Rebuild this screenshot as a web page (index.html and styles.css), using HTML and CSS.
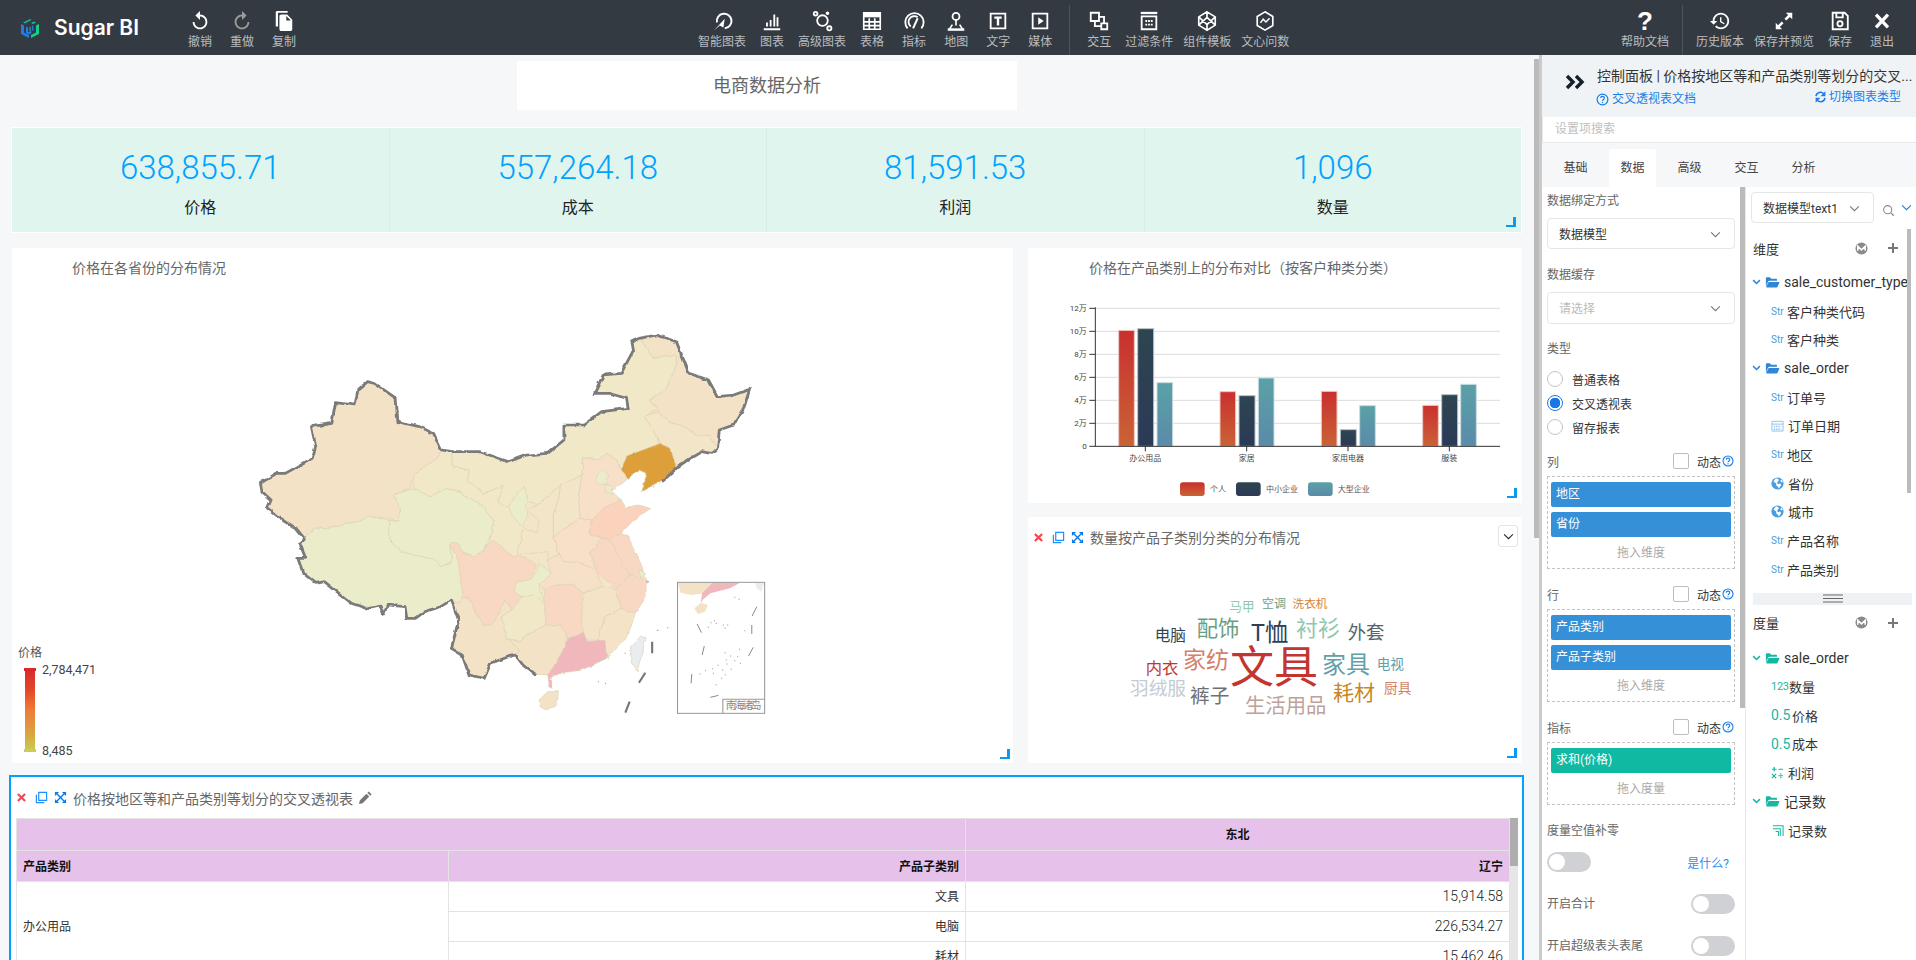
FILE: index.html
```html
<!DOCTYPE html>
<html lang="zh-CN">
<head>
<meta charset="utf-8">
<title>Sugar BI</title>
<link rel="stylesheet" href="styles.css">
</head>
<body>
<svg class="defs" aria-hidden="true">
  <defs>
    <symbol id="folder" viewBox="0 0 24 20"><path fill="currentColor" d="M1 17V3.500C1 2.700 1.700 2 2.500 2h5L10 4.500h8c.8 0 1.500.7 1.500 1.500v2H7c-1 0-1.800.5-2.200 1.300zM6 10h16.500c.8 0 1.200.7.900 1.400l-3 6.600c-.2.600-.8 1-1.400 1H2.500c-.8 0-1.200-.7-.9-1.400L5 10.800c.2-.5.500-.8 1-.8z"/></symbol>
    <symbol id="globe" viewBox="0 0 16 16"><circle cx="8" cy="8" r="7.500" fill="#4a9de0"/><path fill="#fff" d="M6 1.500l3 1 .5 2-2 2 1 2.500 3-1 1 2-3 4-1-2-2-1.500V8L3 5.500zM13 3l1.500 3-2 .5-1-2z"/></symbol>
    <symbol id="xi" viewBox="0 0 10 10"><path fill="none" stroke="#f4474f" stroke-width="2.400" d="M1 1l8 8M9 1l-8 8"/></symbol>
    <symbol id="copyi" viewBox="0 0 14 14"><path fill="none" stroke="currentColor" stroke-width="1.300" d="M4 1.500h8.500v8.500H4zM1.500 4v8.500H10"/></symbol>
    <symbol id="expandi" viewBox="0 0 14 14"><path fill="none" stroke="currentColor" stroke-width="1.500" d="M3 3l8 8M11 3l-8 8"/><path fill="currentColor" d="M1 1h4.500L1 5.500zM13 1v4.500L8.500 1zM1 13V8.500L5.500 13zM13 13H8.500L13 8.500z"/></symbol>
    <symbol id="helpi" viewBox="0 0 14 14"><circle cx="7" cy="7" r="5.800" fill="none" stroke="currentColor" stroke-width="1.300"/><path fill="none" stroke="currentColor" stroke-width="1.300" d="M5 5.500C5 4.300 6 3.700 7 3.700s2 .7 2 1.800C9 7 7 7 7 8.600"/><circle cx="7" cy="10.300" r=".8" fill="currentColor"/></symbol>
    <symbol id="chev" viewBox="0 0 12 8"><path fill="none" stroke="currentColor" stroke-width="1.200" d="M1 1.500l5 5 5-5"/></symbol>
    <symbol id="chevb" viewBox="0 0 12 8"><path fill="none" stroke="currentColor" stroke-width="2" d="M1.500 1.500L6 6l4.500-4.500"/></symbol>
    <symbol id="mono" viewBox="0 0 14 14"><circle cx="7" cy="7" r="6.500" fill="#8a8a8a"/><path fill="none" stroke="#fff" stroke-width="1.600" d="M3 9.500V4.500l4 4 4-4v5"/></symbol>
    <symbol id="plus" viewBox="0 0 12 12"><path fill="#777" d="M5 1h2v4h4v2H7v4H5V7H1V5h4z"/></symbol>
  </defs>
</svg>

<header class="topbar">
  <div class="brand">
    <svg class="logo" viewBox="0 0 20 20"><path fill="#1f7de6" d="M1 6l3 1.500v7L9 17v3l-8-4z"/><path fill="#1f7de6" d="M6 8.500l2 1v4l1 .5 1-.5 1.500-.5v2L9 16.500 6 15z"/><path fill="#12d08a" d="M19 6l-3 1.500v7L11 17v3l8-4z"/><path fill="#0fb59a" d="M3 4.500L10 1l1.500 1L5 5.500z"/><path fill="#14c98d" d="M11 5l3-1.500 2 1-3 1.500z"/><path fill="#1f9fd0" d="M9.500 9v4h1.200V9z"/><path fill="#1f7de6" d="M12 8v4.500h1.300V7.500z"/></svg>
    <span class="brand-name">Sugar BI</span>
  </div>

  <nav class="tools tools-left">
    <div class="tool"><svg class="ticon" viewBox="0 0 24 24"><path fill="#fff" d="M12 5V1L7 6l5 5V7c3.310 0 6 2.690 6 6s-2.690 6-6 6-6-2.690-6-6H4c0 4.420 3.580 8 8 8s8-3.580 8-8-3.580-8-8-8z"/></svg><span>撤销</span></div>
    <div class="tool"><svg class="ticon" viewBox="0 0 24 24"><path fill="#9c9c9c" d="M12 5V1l5 5-5 5V7c-3.310 0-6 2.690-6 6s2.690 6 6 6 6-2.690 6-6h2c0 4.420-3.580 8-8 8s-8-3.580-8-8 3.580-8 8-8z"/></svg><span>重做</span></div>
    <div class="tool"><svg class="ticon" viewBox="0 0 24 24"><path fill="#fff" d="M16 1H4.500C3.400 1 3 1.900 3 3v15h2.500V3H16zM15.500 5l5.500 5.500V21c0 1.100-.9 2-2 2H9c-1.100 0-2-.9-2-2V7c0-1.100.9-2 2-2zM14.500 6.500v5h5z"/></svg><span>复制</span></div>
  </nav>

  <nav class="tools tools-center">
    <div class="tool wide"><svg class="ticon" viewBox="0 0 24 24"><path fill="none" stroke="#fff" stroke-width="2.200" d="M6.500 13.500A8 8 0 1 1 15 20"/><path fill="#fff" d="M3 22.500L15 9.500 13.500 19 9.500 17z"/></svg><span>智能图表</span></div>
    <div class="tool"><svg class="ticon" viewBox="0 0 24 24"><path fill="none" stroke="#fff" stroke-width="2" d="M6.500 18v-4.500M10.500 18v-7M14.500 18V5M18 18V8"/><path stroke="#fff" stroke-width="2.200" d="M3 21h18"/></svg><span>图表</span></div>
    <div class="tool wide"><svg class="ticon" viewBox="0 0 24 24"><g fill="none" stroke="#fff" stroke-width="2"><circle cx="12.500" cy="11.500" r="5.800"/><circle cx="5" cy="4" r="2"/><circle cx="20" cy="20" r="2.300"/><circle cx="18" cy="3.500" r="1"/></g></svg><span>高级图表</span></div>
    <div class="tool"><svg class="ticon" viewBox="0 0 24 24"><path fill="none" stroke="#fff" stroke-width="1.800" d="M3 3h18v18H3zM3 13h18M3 17h18M9 9v12M15 9v12"/><path fill="#fff" d="M3 3h18v5H3z"/></svg><span>表格</span></div>
    <div class="tool"><svg class="ticon" viewBox="0 0 24 24"><path fill="none" stroke="#fff" stroke-width="2" d="M5 20A10 10 0 1 1 20 20M8.500 18A6 6 0 1 1 16 8"/><path fill="none" stroke="#fff" stroke-width="2.200" d="M11 20l5-11"/></svg><span>指标</span></div>
    <div class="tool"><svg class="ticon" viewBox="0 0 24 24"><circle cx="12" cy="7" r="3.800" fill="none" stroke="#fff" stroke-width="2"/><path fill="none" stroke="#fff" stroke-width="1.800" d="M12 11v6M8 16l-3.500 5.500h15L16 16"/><path fill="#fff" d="M3 20h18v2.500H3z"/></svg><span>地图</span></div>
    <div class="tool"><svg class="ticon" viewBox="0 0 24 24"><path fill="none" stroke="#fff" stroke-width="2" d="M4 4h16v16H4z"/><path fill="#fff" d="M8 7h8v2.500h-2.700V17h-2.600V9.500H8z"/></svg><span>文字</span></div>
    <div class="tool"><svg class="ticon" viewBox="0 0 24 24"><path fill="none" stroke="#fff" stroke-width="2" d="M4 4h16v16H4z"/><path fill="#fff" d="M10 8l6 4-6 4z"/></svg><span>媒体</span></div>
    <i class="tdiv"></i>
    <div class="tool"><svg class="ticon" viewBox="0 0 24 24"><path fill="none" stroke="#fff" stroke-width="2" d="M3 3h9v9H3zM14.500 14.500H21V21h-6.500zM12 7.500h5.500v7M7.500 12v5.500h7"/></svg><span>交互</span></div>
    <div class="tool wide"><svg class="ticon" viewBox="0 0 24 24"><path fill="#fff" d="M3 2h18v2.500H3z"/><path fill="none" stroke="#fff" stroke-width="2" d="M4 7h16v14H4z"/><path fill="#fff" d="M8 11h2v2H8zM11 11h2v2h-2zM14 11h2v2h-2zM8 15h2v2H8zM11 15h2v2h-2zM14 15h2v2h-2z"/></svg><span>过滤条件</span></div>
    <div class="tool wide"><svg class="ticon" viewBox="0 0 24 24"><path fill="none" stroke="#fff" stroke-width="1.800" d="M12 2l9 5.500v9L12 22l-9-5.500v-9zM12 2v6M12 16v6M3 7.500L12 16l9-8.500M3 16.500L12 8l9 8.500"/></svg><span>组件模板</span></div>
    <div class="tool wide"><svg class="ticon" viewBox="0 0 24 24"><path fill="none" stroke="#fff" stroke-width="1.800" d="M12 2l8.500 5v10L12 22l-8.500-5V7z"/><path fill="none" stroke="#fff" stroke-width="1.600" d="M7 14l3-4 3 3 4-4"/></svg><span>文心问数</span></div>
  </nav>

  <nav class="tools tools-right">
    <div class="tool wide"><span class="qmark">?</span><span>帮助文档</span></div>
    <i class="tdiv"></i>
    <div class="tool wide"><svg class="ticon" viewBox="0 0 24 24"><path fill="#fff" d="M13 3c-4.970 0-9 4.030-9 9H1l3.890 3.890.07.14L9 12H6c0-3.870 3.130-7 7-7s7 3.130 7 7-3.130 7-7 7c-1.930 0-3.680-.79-4.940-2.060l-1.420 1.420C8.270 19.990 10.510 21 13 21c4.970 0 9-4.030 9-9s-4.030-9-9-9zm-1 5v5l4.280 2.540.72-1.210-3.500-2.080V8H12z"/></svg><span>历史版本</span></div>
    <div class="tool wide"><svg class="ticon" viewBox="0 0 24 24"><path fill="#fff" d="M14 3h7v7l-2.500-2.500-4 4-2-2 4-4zM10 21H3v-7l2.500 2.500 4-4 2 2-4 4z"/></svg><span>保存并预览</span></div>
    <div class="tool"><svg class="ticon" viewBox="0 0 24 24"><path fill="none" stroke="#fff" stroke-width="2" d="M4 3h13l3.500 3.500V21H4zM8 3v5h7V3"/><circle cx="12" cy="15" r="2.800" fill="none" stroke="#fff" stroke-width="2"/></svg><span>保存</span></div>
    <div class="tool"><svg class="ticon" viewBox="0 0 24 24"><path fill="none" stroke="#fff" stroke-width="3.600" d="M5.500 5l13 14M18.500 5l-13 14"/></svg><span>退出</span></div>
  </nav>
</header>

<main class="main">
  <section class="canvas">
    <div class="page-title">电商数据分析</div>

    <div class="kpi">
      <div class="kpi-cell"><div class="kpi-num">638,855.71</div><div class="kpi-label">价格</div></div>
      <div class="kpi-cell"><div class="kpi-num">557,264.18</div><div class="kpi-label">成本</div></div>
      <div class="kpi-cell"><div class="kpi-num">81,591.53</div><div class="kpi-label">利润</div></div>
      <div class="kpi-cell"><div class="kpi-num">1,096</div><div class="kpi-label">数量</div></div>
      <i class="corner"></i>
    </div>

    <div class="charts">
      <div class="card map-card">
        <div class="card-title map-title">价格在各省份的分布情况</div>
        <div class="map-body">
          <svg class="map" viewBox="0 0 1568 1260" preserveAspectRatio="none">
            <defs>
              <filter id="rough" x="-5%" y="-5%" width="110%" height="110%" color-interpolation-filters="sRGB">
                <feTurbulence type="fractalNoise" baseFrequency="0.04" numOctaves="2" seed="4"/>
                <feDisplacementMap in="SourceGraphic" scale="11" xChannelSelector="R" yChannelSelector="G"/>
              </filter>
            </defs>
            <g filter="url(#rough)">
              <polygon class="c-sand2" points="855,1095 820,1065 800,1035 780,1040 730,1060 712,1105 670,1095 650,1035 620,1015 640,930 620,870 590,890 545,905 520,925 495,925 490,890 440,885 430,915 420,885 380,895 340,880 305,850 265,815 240,820 205,790 190,745 212,745 195,700 208,685 185,655 135,620 105,595 115,570 90,545 85,520 130,490 155,490 230,445 240,410 228,350 285,340 295,278 350,285 358,240 385,215 405,220 465,265 470,335 530,350 570,370 592,420 620,425 700,425 780,455 830,435 890,430 935,390 935,345 990,345 1040,305 1115,295 1110,265 1060,250 1020,250 1045,195 1095,190 1130,120 1125,95 1145,85 1195,75 1250,95 1285,190 1340,210 1365,260 1410,255 1455,238 1440,290 1410,345 1370,360 1365,415 1350,430 1320,425 1280,450 1250,475 1215,510 1150,545 1165,490 1145,480 1115,505 1070,545 1095,570 1110,595 1140,585 1178,595 1130,630 1095,670 1115,680 1150,760 1160,790 1165,810 1165,860 1135,910 1115,975 1075,1020 1055,1045 985,1080 920,1090 895,1105 890,1095"/>
              <g class="prov">
                <polygon class="c-tan" points="85,520 130,490 155,490 230,445 240,410 228,350 285,340 295,278 350,285 358,240 385,215 405,220 465,265 470,335 530,350 570,370 592,420 580,445 515,490 505,535 458,555 478,600 470,630 400,620 300,650 235,655 208,685 185,655 135,620 105,595 115,570 90,545"/>
                <polygon class="c-green" points="208,685 235,655 300,650 400,620 445,632 445,690 480,725 575,750 590,770 620,755 615,700 640,755 652,860 640,880 620,870 590,890 545,905 520,925 495,925 490,890 440,885 430,915 420,885 380,895 340,880 305,850 265,815 240,820 205,790 190,745 212,745 195,700"/>
                <polygon class="c-green" points="445,632 470,630 478,600 458,555 515,535 560,560 605,535 640,545 700,580 740,630 725,690 710,715 690,740 650,725 635,695 615,700 620,755 590,770 575,750 480,725 445,690"/>
                <polygon class="c-sand" points="592,420 620,425 625,470 670,480 665,510 710,550 765,525 750,580 780,590 820,655 815,690 805,735 790,740 735,690 710,715 725,690 740,630 700,580 640,545 605,535 560,560 515,535 515,490 580,445"/>
                <polygon class="c-sand" points="620,425 700,425 780,455 830,435 890,430 935,390 935,345 990,345 1040,305 1115,295 1110,265 1060,250 1020,250 1045,195 1095,190 1130,120 1125,95 1145,85 1185,145 1250,135 1250,165 1220,240 1175,270 1195,300 1160,320 1195,375 1200,405 1110,440 1095,480 1080,450 1055,430 1035,450 990,445 985,495 925,525 880,570 860,580 835,575 825,530 805,550 780,590 750,580 765,525 710,550 665,510 670,480 625,470"/>
                <polygon class="c-tan" points="1145,85 1195,75 1250,95 1285,190 1340,210 1365,260 1410,255 1455,238 1440,290 1410,345 1370,360 1365,415 1340,375 1310,380 1280,355 1230,335 1200,305 1175,270 1220,240 1250,165 1250,135 1185,145"/>
                <polygon class="c-sand2" points="1160,320 1200,305 1230,335 1280,355 1310,380 1340,375 1365,415 1350,430 1320,425 1280,450 1250,475 1235,420 1205,400 1195,375"/>
                <polygon class="c-orange" points="1095,480 1110,438 1205,400 1235,420 1250,475 1215,510 1150,545 1165,490 1145,480 1115,505"/>
                <polygon class="c-peach" points="985,495 990,445 1035,450 1055,430 1080,450 1095,480 1115,505 1070,545 1095,570 1040,600 1015,630 980,625 975,560"/>
                <polygon class="c-green" points="1020,510 1040,478 1060,495 1055,520 1035,525"/>
                <polygon class="c-green" points="1050,520 1070,530 1072,552 1052,548"/>
                <polygon class="c-sand2" points="925,525 985,495 975,560 980,625 905,680 905,610 920,570"/>
                <polygon class="c-sand2" points="880,570 925,525 920,570 905,610 905,680 920,730 885,755 890,725 805,735 815,690 820,655 860,665 865,630 835,605 860,580"/>
                <polygon class="c-green" points="825,530 835,575 825,590 835,605 820,655 790,615 780,590 805,550"/>
                <polygon class="c-peach" points="905,680 980,625 1015,630 1005,670 1040,685 1010,730 1025,780 985,760 935,755 920,730"/>
                <polygon class="c-salmon" points="1015,630 1040,600 1095,570 1110,595 1140,585 1178,595 1130,630 1095,670 1060,685 1030,680 1005,670"/>
                <polygon class="c-salmon2" points="1060,685 1095,670 1115,680 1150,760 1160,790 1120,795 1090,745 1070,700"/>
                <polygon class="c-salmon2" points="1040,685 1060,685 1070,700 1090,745 1120,795 1080,835 1030,790 1010,730"/>
                <polygon class="c-salmon2" points="1120,795 1140,800 1165,810 1165,860 1135,910 1095,895 1080,835"/>
                <polygon class="c-green" points="1145,775 1165,790 1150,805"/>
                <polygon class="c-peach2" points="885,755 920,730 935,755 985,760 1025,780 1030,790 1040,830 990,850 960,825 910,825 885,845 865,820 900,790"/>
                <polygon class="c-green" points="865,760 900,790 865,820 880,880 850,855 815,860 795,845 800,820 840,810 860,785"/>
                <polygon class="c-salmon2" points="615,700 635,695 650,725 690,740 735,690 790,740 805,735 860,760 840,810 800,820 795,845 815,860 810,885 790,900 770,870 735,945 710,945 665,860 652,860 640,755"/>
                <polygon class="c-tan" points="652,860 665,860 710,945 735,945 770,870 790,900 760,920 775,985 810,1020 800,1035 780,1040 730,1060 712,1105 670,1095 650,1035 620,1015 640,930 620,870 640,880"/>
                <polygon class="c-sand" points="760,920 790,900 815,860 850,855 880,880 885,945 830,975 810,995 775,985"/>
                <polygon class="c-salmon2" points="880,840 910,825 960,825 990,850 985,920 990,970 945,985 925,945 885,945"/>
                <polygon class="c-tan2" points="990,850 1040,830 1080,835 1095,895 1050,920 1030,990 1000,990 990,970 985,920"/>
                <polygon class="c-tan2" points="1095,895 1135,910 1115,975 1075,1020 1055,1045 1030,990 1050,920"/>
                <polygon class="c-tan" points="775,985 810,995 830,975 885,945 925,945 945,985 925,1040 890,1095 850,1090 820,1065 800,1035 810,1020"/>
                <polygon class="c-pink" points="945,985 990,970 1000,995 1050,990 1055,1045 985,1080 920,1090 895,1105 905,1135 890,1130 890,1095 925,1040"/>
                <polygon class="c-tan" points="865,1170 890,1145 920,1145 915,1185 885,1200 868,1190"/>
                <polygon class="c-taiwan" points="1125,1010 1150,978 1165,980 1140,1085 1120,1040"/>
              </g>
              <polyline class="border" points="855,1095 820,1065 800,1035 780,1040 730,1060 712,1105 670,1095 650,1035 620,1015 640,930 620,870 590,890 545,905 520,925 495,925 490,890 440,885 430,915 420,885 380,895 340,880 305,850 265,815 240,820 205,790 190,745 212,745 195,700 208,685 185,655 135,620 105,595 115,570 90,545 85,520 130,490 155,490 230,445 240,410 228,350 285,340 295,278 350,285 358,240 385,215 405,220 465,265 470,335 530,350 570,370 592,420 620,425 700,425 780,455 830,435 890,430 935,390 935,345 990,345 1040,305 1115,295 1110,265 1060,250 1020,250 1045,195 1095,190 1130,120 1125,95 1145,85 1195,75 1250,95 1285,190 1340,210 1365,260 1410,255 1455,238 1440,290 1410,345 1370,360 1365,415 1350,430 1320,425 1280,450 1250,475 1215,510"/>
            </g>
            <path class="dash" d="M1182,995V1030M1163,1088L1145,1118M1119,1175L1107,1208"/>
            <path class="dots" d="M1195,961h5M1224,953h3M1105,1030h3M1160,1090h3M1030,1115h3M1050,1120h3M1185,530h3M1165,815h8"/>
            <g class="inset">
              <rect x="1253" y="817" width="244" height="393" fill="#fff"/>
              <path class="c-tan" d="M1254,818H1350L1330,850 1290,855 1262,848Z"/>
              <path class="c-pink" d="M1350,818H1428L1400,835 1345,850 1325,868 1318,880 1322,850 1340,830Z"/>
              <path class="c-tan" d="M1300,895L1320,878 1338,885 1330,905 1310,912Z"/>
              <path class="c-taiwan" d="M1470,818H1495L1488,845 1475,835Z"/>
              <path class="dash-thin" d="M1475,890L1462,918M1308,942L1320,968M1461,945V972M1328,1008L1322,1035M1465,1012L1452,1038M1293,1092L1291,1120M1345,1162L1368,1156"/>
              <path class="dots" d="M1345,938h3M1355,932h3M1360,940h3M1380,945h3M1392,945h3M1385,955h3M1440,962h3M1338,952h3M1412,862h3M1424,868h3M1385,1028h3M1425,1018h3M1400,1038h3M1420,1040h3M1388,1050h3M1412,1052h3M1365,1066h3M1390,1062h3M1428,1060h3M1350,1076h3M1378,1080h3M1402,1078h3M1330,1082h3M1314,1092h3M1352,1090h3M1385,1095h3M1375,1105h3M1360,1124h3"/>
              <rect class="inset-box" x="1253" y="817" width="244" height="393"/>
              <path class="inset-box" d="M1380,1210V1168H1497"/>
              <text class="inset-text" x="1438" y="1198" text-anchor="middle" textLength="100">南海诸岛</text>
            </g>
          </svg>
          <div class="legend">
            <div class="legend-name">价格</div>
            <div class="legend-row">
              <div class="legend-bar"></div>
              <div class="legend-vals"><span>2,784,471</span><span>8,485</span></div>
            </div>
          </div>
        </div>
        <i class="corner corner-map"></i>
      </div>

      <div class="side">
        <div class="card bar-card">
          <div class="card-title side-title">价格在产品类别上的分布对比（按客户种类分类）</div>
          <svg class="bars" viewBox="-6 120 1482 630">
            <defs>
              <linearGradient id="gr" x1="0" y1="0" x2="0" y2="1"><stop offset="0" stop-color="#c9302e"/><stop offset="1" stop-color="#c96336"/></linearGradient>
              <linearGradient id="gn" x1="0" y1="0" x2="0" y2="1"><stop offset="0" stop-color="#2d4551"/><stop offset="1" stop-color="#2b3a56"/></linearGradient>
              <linearGradient id="gt" x1="0" y1="0" x2="0" y2="1"><stop offset="0" stop-color="#5aa1a7"/><stop offset="1" stop-color="#5b8aa9"/></linearGradient>
            </defs>
            <path class="grid" d="M196 175H1410M196 244H1410M196 313H1410M196 382H1410M196 451H1410M196 520H1410"/>
            <g class="b-r">
              <rect x="266" y="241" width="47" height="348"/><rect x="570" y="425" width="47" height="164"/><rect x="874" y="424" width="47" height="165"/><rect x="1178" y="466" width="47" height="123"/>
            </g>
            <g class="b-n">
              <rect x="323" y="236" width="48" height="353"/><rect x="627" y="437" width="48" height="152"/><rect x="931" y="539" width="48" height="50"/><rect x="1235" y="434" width="48" height="155"/>
            </g>
            <g class="b-t">
              <rect x="381" y="398" width="47" height="191"/><rect x="685" y="384" width="47" height="205"/><rect x="989" y="467" width="47" height="122"/><rect x="1292" y="403" width="47" height="186"/>
            </g>
            <path class="axis" d="M196 172V589M178 175H196M178 244H196M178 313H196M178 382H196M178 451H196M178 520H196M178 589H1410M346 589V604M650 589V604M954 589V604M1258 589V604"/>
            <g class="ylab">
              <text x="170" y="183">12万</text><text x="170" y="252">10万</text><text x="170" y="321">8万</text><text x="170" y="390">6万</text><text x="170" y="459">4万</text><text x="170" y="528">2万</text><text x="170" y="597">0</text>
            </g>
            <g class="xlab">
              <text x="346" y="633">办公用品</text><text x="650" y="633">家居</text><text x="954" y="633">家用电器</text><text x="1258" y="633">服装</text>
            </g>
            <rect x="450" y="697" width="74" height="41" rx="9" fill="url(#gr)"/>
            <rect x="618" y="697" width="74" height="41" rx="9" fill="url(#gn)"/>
            <rect x="834" y="697" width="74" height="41" rx="9" fill="url(#gt)"/>
            <g class="leg">
              <text x="540" y="726">个人</text><text x="708" y="726">中小企业</text><text x="923" y="726">大型企业</text>
            </g>
          </svg>
          <i class="corner"></i>
        </div>

        <div class="card cloud-card">
          <div class="card-head">
            <svg class="ic-x"><use href="#xi"/></svg>
            <svg class="ic ic-copy"><use href="#copyi"/></svg>
            <svg class="ic ic-exp"><use href="#expandi"/></svg>
            <span class="card-title-inline">数量按产品子类别分类的分布情况</span>
            <span class="drop-btn"><svg class="drop-chev"><use href="#chev"/></svg></span>
          </div>
          <svg class="cloud" viewBox="-6 141 1482 618">
            <text x="732" y="518" font-size="132" fill="#c23531">文具</text>
            <text x="636" y="304" font-size="38" fill="#91c7ae">马甲</text>
            <text x="732" y="294" font-size="36" fill="#6e9f85">空调</text>
            <text x="840" y="294" font-size="35" fill="#d48233">洗衣机</text>
            <text x="421" y="394" font-size="47" fill="#2f4554">电脑</text>
            <text x="564" y="378" font-size="64" fill="#6a9d80">配饰</text>
            <text x="719" y="394" font-size="70" fill="#2c4153">T恤</text>
            <text x="864" y="379" font-size="66" fill="#91c7ae">衬衫</text>
            <text x="1008" y="388" font-size="55" fill="#546570">外套</text>
            <text x="528" y="475" font-size="69" fill="#d4806c">家纺</text>
            <text x="396" y="492" font-size="49" fill="#c23531">内衣</text>
            <text x="948" y="490" font-size="72" fill="#61a0a8">家具</text>
            <text x="1081" y="476" font-size="41" fill="#61a0a8">电视</text>
            <text x="384" y="556" font-size="56" fill="#c4ccd3">羽绒服</text>
            <text x="539" y="580" font-size="59" fill="#6e7074">裤子</text>
            <text x="767" y="609" font-size="61" fill="#bda29a">生活用品</text>
            <text x="972" y="570" font-size="63" fill="#ca8622">耗材</text>
            <text x="1103" y="549" font-size="41" fill="#d48265">厨具</text>
          </svg>
          <i class="corner"></i>
        </div>
      </div>
    </div>

    <div class="table-card">
      <div class="card-head table-head">
        <svg class="ic-x"><use href="#xi"/></svg>
        <svg class="ic ic-copy"><use href="#copyi"/></svg>
        <svg class="ic ic-exp"><use href="#expandi"/></svg>
        <span class="card-title-inline">价格按地区等和产品类别等划分的交叉透视表</span>
        <svg class="ic-pencil" viewBox="0 0 16 16"><path fill="#777" d="M11.500 1.500l3 3-1.500 1.500-3-3zM9 4l3 3-7 7-4 1 1-4z"/></svg>
      </div>
      <div class="table-wrap">
        <table class="pivot">
          <colgroup><col class="col-a"><col class="col-b"><col class="col-c"></colgroup>
          <thead>
            <tr class="hr1"><th colspan="2"></th><th class="center">东北</th></tr>
            <tr class="hr2"><th class="left">产品类别</th><th>产品子类别</th><th>辽宁</th></tr>
          </thead>
          <tbody>
            <tr><td class="left" rowspan="3">办公用品</td><td>文具</td><td class="num">15,914.58</td></tr>
            <tr><td>电脑</td><td class="num">226,534.27</td></tr>
            <tr><td>耗材</td><td class="num">15,462.46</td></tr>
          </tbody>
        </table>
        <div class="table-scroll"><i></i></div>
      </div>
    </div>
  </section>

  <div class="canvas-scroll"><i></i></div>
  <div class="panel-edge"></div>

  <aside class="panel">
    <div class="panel-head">
      <svg class="collapse" viewBox="0 0 20 16"><path fill="none" stroke="#14202c" stroke-width="3.400" d="M2 2l6 6-6 6M11 2l6 6-6 6"/></svg>
      <div class="panel-head-text">
        <div class="panel-title">控制面板 | 价格按地区等和产品类别等划分的交叉...</div>
        <div class="panel-links">
          <span class="plink plink-doc"><svg class="ic-help"><use href="#helpi"/></svg>交叉透视表文档</span>
          <span class="plink plink-switch"><svg class="ic-sync" viewBox="0 0 16 16"><path fill="none" stroke="#1a7ee6" stroke-width="2" d="M2.500 7A5.500 5.500 0 0 1 12 4M13.500 9A5.500 5.500 0 0 1 4 12"/><path fill="#1a7ee6" d="M14 1v6H8zM2 15V9h6z"/></svg>切换图表类型</span>
        </div>
      </div>
    </div>
    <div class="search">设置项搜索</div>
    <div class="tabs">
      <span class="tab">基础</span><span class="tab active">数据</span><span class="tab">高级</span><span class="tab">交互</span><span class="tab">分析</span>
    </div>
    <div class="panel-body">
      <div class="settings">
        <div class="label l1">数据绑定方式</div>
        <div class="select s1">数据模型<svg class="sel-chev"><use href="#chev"/></svg></div>
        <div class="label l2">数据缓存</div>
        <div class="select s2 ph">请选择<svg class="sel-chev"><use href="#chev"/></svg></div>
        <div class="label l3">类型</div>
        <div class="radios">
          <div class="radio"><i></i>普通表格</div>
          <div class="radio on"><i></i>交叉透视表</div>
          <div class="radio"><i></i>留存报表</div>
        </div>
        <div class="field-head fh1"><span class="label">列</span><span class="dyn"><i class="check"></i>动态<svg class="ic-help"><use href="#helpi"/></svg></span></div>
        <div class="dropbox tall">
          <div class="pill">地区</div><div class="pill">省份</div><div class="drop-ph">拖入维度</div>
        </div>
        <div class="field-head"><span class="label">行</span><span class="dyn"><i class="check"></i>动态<svg class="ic-help"><use href="#helpi"/></svg></span></div>
        <div class="dropbox tall">
          <div class="pill">产品类别</div><div class="pill">产品子类别</div><div class="drop-ph">拖入维度</div>
        </div>
        <div class="field-head"><span class="label">指标</span><span class="dyn"><i class="check"></i>动态<svg class="ic-help"><use href="#helpi"/></svg></span></div>
        <div class="dropbox short">
          <div class="pill green">求和(价格)</div><div class="drop-ph">拖入度量</div>
        </div>
        <div class="label l4">度量空值补零</div>
        <div class="switch-row first"><i class="toggle"></i><span class="what">是什么?</span></div>
        <div class="switch-row"><span class="label">开启合计</span><i class="toggle"></i></div>
        <div class="switch-row"><span class="label">开启超级表头表尾</span><i class="toggle"></i></div>
      </div>
      <div class="settings-scroll"><i></i></div>
      <div class="fields">
        <div class="model-row">
          <div class="select model">数据模型text1<svg class="sel-chev"><use href="#chev"/></svg></div>
          <svg class="ic-search" viewBox="0 0 16 16"><circle cx="7" cy="7" r="5" fill="none" stroke="#888" stroke-width="1.300"/><path stroke="#888" stroke-width="1.500" d="M11 11l3.500 3.500"/></svg>
          <svg class="chev-blue"><use href="#chev"/></svg>
        </div>
        <div class="group-head"><span>维度</span><svg class="gi"><use href="#mono"/></svg><svg class="gp"><use href="#plus"/></svg></div>
        <div class="tree">
          <div class="node folder"><svg class="tchev"><use href="#chevb"/></svg><svg class="tfold"><use href="#folder"/></svg><span>sale_customer_type</span></div>
          <div class="node"><b class="str">Str</b>客户种类代码</div>
          <div class="node"><b class="str">Str</b>客户种类</div>
          <div class="node folder"><svg class="tchev"><use href="#chevb"/></svg><svg class="tfold"><use href="#folder"/></svg><span>sale_order</span></div>
          <div class="node"><b class="str">Str</b>订单号</div>
          <div class="node"><svg class="ntype" viewBox="0 0 14 14"><path fill="none" stroke="#8cc1ec" stroke-width="1" d="M1 2.500h12v10.500H1zM1 5.500h12"/><path stroke="#8cc1ec" stroke-width="1.600" stroke-dasharray="1.500 1" d="M3 8h8M3 11h8"/></svg>订单日期</div>
          <div class="node"><b class="str">Str</b>地区</div>
          <div class="node"><svg class="ntype"><use href="#globe"/></svg>省份</div>
          <div class="node"><svg class="ntype"><use href="#globe"/></svg>城市</div>
          <div class="node"><b class="str">Str</b>产品名称</div>
          <div class="node"><b class="str">Str</b>产品类别</div>
        </div>
        <div class="drag-bar"><svg class="drag-lines" viewBox="0 0 20 9"><path stroke="#666" stroke-width="1" d="M0 1h20M0 4.500h20M0 8h20"/></svg></div>
        <div class="group-head measure"><span>度量</span><svg class="gi"><use href="#mono"/></svg><svg class="gp"><use href="#plus"/></svg></div>
        <div class="tree green-tree">
          <div class="node folder"><svg class="tchev"><use href="#chevb"/></svg><svg class="tfold"><use href="#folder"/></svg><span>sale_order</span></div>
          <div class="node"><b class="n123">123</b>数量</div>
          <div class="node"><b class="n05">0.5</b>价格</div>
          <div class="node"><b class="n05">0.5</b>成本</div>
          <div class="node"><svg class="ntype" viewBox="0 0 14 14"><path fill="none" stroke="#13b8a0" stroke-width="1.300" d="M1 3.500h5M3.500 1v5M8 3.500h5M1 8.500l4.500 4.500M5.500 8.500L1 13M8 10.500h5"/><circle cx="10.500" cy="8.500" r=".8" fill="#13b8a0"/><circle cx="10.500" cy="12.500" r=".8" fill="#13b8a0"/></svg>利润</div>
          <div class="node folder"><svg class="tchev"><use href="#chevb"/></svg><svg class="tfold"><use href="#folder"/></svg><span>记录数</span></div>
          <div class="node"><svg class="ntype" viewBox="0 0 14 14"><path fill="none" stroke="#13b8a0" stroke-width="1.100" d="M2 2h11v11M2 5h8v8M5 8h3v5"/></svg>记录数</div>
        </div>
        <div class="fields-scroll"></div>
      </div>
    </div>
  </aside>
</main>
</body>
</html>
```

FILE: styles.css
```css
* { box-sizing: border-box; }
html, body { margin: 0; padding: 0; }
body {
  width: 1916px;
  height: 960px;
  overflow: hidden;
  font-family: Roboto, "Noto Sans CJK SC", sans-serif;
  font-size: 12px;
  color: #333;
  background: #f6f7f9;
}
.defs { position: absolute; width: 0; height: 0; }
i { display: block; font-style: normal; }

/* top bar */
.topbar { height: 55px; display: flex; align-items: stretch; background: #343a42; color: #b9bcbf; }
.brand { width: 179px; display: flex; align-items: center; padding-left: 20px; }
.logo { width: 20px; height: 20px; flex: none; }
.brand-name { margin-left: 14px; font-family: Inter, sans-serif; font-size: 21px; font-weight: 600; color: #fff; }
.tools { display: flex; align-items: stretch; }
.tools-center { margin-left: 388px; }
.tools-right { margin-left: auto; margin-right: 13px; }
.tool { padding: 0 9px; display: flex; flex-direction: column; align-items: center; white-space: nowrap; }
.tool.wide { padding: 0 5px; }
.tool > span:last-child { margin-top: 2px; line-height: 17px; }
.ticon { width: 22px; height: 22px; margin-top: 10px; flex: none; }
.qmark { height: 22px; margin-top: 10px; color: #fff; font: 700 26px/22px "Liberation Sans", sans-serif; }
.tdiv { width: 1px; height: 50px; margin: 5px 8px 0; background: #4e545b; }

/* layout */
.main { height: 905px; display: flex; }
.canvas { width: 1534px; flex: none; padding-top: 6px; overflow: hidden; }
.canvas-scroll { width: 5px; flex: none; padding-top: 4px; }
.canvas-scroll i { height: 479px; background: #bbb; }
.panel-edge { width: 3px; flex: none; background: #cbcbcb; }
.panel { width: 374px; flex: none; background: #fff; display: flex; flex-direction: column; }

/* dashboard */
.page-title { width: 500px; height: 49px; margin-left: 517px; background: #fff; color: #666; font-size: 18px; line-height: 49px; text-align: center; }
.kpi { position: relative; width: 1511px; height: 106px; margin: 17px 0 0 11px; display: flex; background: #e0f5ee; border: 1px solid #fff; }
.kpi-cell { flex: 1; border-right: 1px solid #dcebe5; text-align: center; }
.kpi-cell:last-of-type { border-right: 0; }
.kpi-num { margin-top: 20px; font-size: 33px; font-weight: 300; line-height: 40px; color: #00a2ff; }
.kpi-label { margin-top: 9px; font-size: 16px; line-height: 22px; color: #222; }
.corner { position: absolute; right: 5px; bottom: 5px; width: 10px; height: 10px; border-right: 3px solid #0a9bf0; border-bottom: 2px solid #0a9bf0; }
.charts { display: flex; gap: 15px; margin: 15px 0 0 12px; height: 515px; }
.card { position: relative; background: #fff; }
.map-card { width: 1001px; }
.card-title { font-size: 14px; color: #666; line-height: 40px; height: 40px; }
.map-title { padding-left: 60px; }
.side-title { padding-left: 61px; }
.map-body { position: relative; height: 475px; }
.map { display: block; width: 560px; height: 420px; margin-left: 218px; padding: 0; position: relative; top: 22px; }
.prov polygon { stroke: #ddd2b8; stroke-width: 2; stroke-linejoin: round; }
.c-tan { fill: #f3e2c5; }
.c-tan2 { fill: #f5e3c8; }
.c-sand { fill: #f1e8c8; }
.c-sand2 { fill: #f2e5c8; }
.c-green { fill: #ebedca; }
.c-orange { fill: #dd9f3a; }
.c-peach { fill: #f8dfc8; }
.c-peach2 { fill: #f6e0c8; }
.c-salmon { fill: #fbd2bb; }
.c-salmon2 { fill: #f9d8c3; }
.c-pink { fill: #f0b7bd; }
.c-taiwan { fill: #e9edee; }
.border { fill: none; stroke: #7a7a7a; stroke-width: 8; stroke-linejoin: round; stroke-linecap: round; }
.dash { fill: none; stroke: #777; stroke-width: 6; }
.dash-thin { fill: none; stroke: #777; stroke-width: 2.500; }
.dots { fill: none; stroke: #999; stroke-width: 3; }
.inset-box { fill: none; stroke: #999; stroke-width: 3; }
.inset-text { font-size: 30px; fill: #888; }
.legend { position: absolute; left: 6px; top: 357px; }
.legend-name { color: #555; line-height: 16px; }
.legend-row { display: flex; margin-top: 7px; }
.legend-bar { position: relative; width: 10px; height: 84px; margin-left: 7px; background: linear-gradient(#d9282a, #e2452b 25%, #f07c35 50%, #e2913d 65%, #d9a83e 80%, #c8cf55); }
.legend-bar::before, .legend-bar::after { content: ""; position: absolute; left: -1px; width: 12px; height: 3px; }
.legend-bar::before { top: 0; background: #d9282a; }
.legend-bar::after { bottom: 0; background: #c8cf55; }
.legend-vals { margin: -5px 0 0 7px; height: 95px; display: flex; flex-direction: column; justify-content: space-between; color: #444; line-height: 14px; font-size: 12.500px; }
.corner-map { right: 3px; bottom: 4px; }
.side { width: 494px; display: flex; flex-direction: column; gap: 14px; }
.bar-card { height: 255px; }
.bars { display: block; width: 494px; height: 210px; margin-top: 2px; }
.grid { stroke: #ddd; stroke-width: 3; fill: none; }
.axis { stroke: #333; stroke-width: 3; fill: none; }
.b-r rect { fill: url(#gr); stroke: #f2c8c4; stroke-width: 3; }
.b-n rect { fill: url(#gn); stroke: #b9c3c8; stroke-width: 3; }
.b-t rect { fill: url(#gt); stroke: #c9dde0; stroke-width: 3; }
.ylab text { font-size: 24px; fill: #444; text-anchor: end; }
.xlab text { font-size: 24px; fill: #444; text-anchor: middle; }
.leg text { font-size: 24px; fill: #555; }
.cloud-card { height: 246px; }
.card-head { height: 40px; display: flex; align-items: center; padding-left: 6px; position: relative; }
.ic-x { width: 9px; height: 9px; flex: none; }
.ic { width: 13px; height: 13px; flex: none; }
.ic-copy { color: #1e90ff; margin-left: 9px; }
.ic-exp { color: #0a7ae8; margin-left: 6px; }
.card-title-inline { font-size: 14px; color: #666; margin-left: 6px; }
.drop-btn { position: absolute; left: 470px; top: 8px; width: 20px; height: 22px; background: #fff; border: 1px solid #e4e4e4; border-radius: 3px; display: flex; align-items: center; justify-content: center; }
.drop-chev { width: 11px; height: 7px; color: #222; }
.cloud { display: block; width: 494px; height: 206px; }
.cloud text { text-anchor: middle; }
.table-card { width: 1515px; height: 190px; margin: 12px 0 0 9px; border: 2px solid #00a2ff; background: #fff; }
.table-head { height: 41px; padding-left: 6px; }
.ic-pencil { width: 15px; height: 15px; margin-left: 5px; }
.table-wrap { display: flex; margin-left: 5px; height: 145px; overflow: hidden; }
.pivot { width: 1493px; flex: none; border-collapse: collapse; table-layout: fixed; align-self: flex-start; }
.col-a { width: 432px; }
.col-b { width: 517px; }
.col-c { width: 544px; }
.pivot th, .pivot td { border: 1px solid #e3e3e3; padding: 0 6px 2px; text-align: right; font-size: 12px; height: 30px; color: #333; font-weight: 400; }
.pivot th { background: #e6c1ea; color: #111; font-weight: 700; }
.hr1 th { height: 32px; }
.hr2 th { height: 31px; }
.pivot .left { text-align: left; }
.pivot .center { text-align: center; }
.pivot .num { font-size: 14px; font-weight: 300; color: #222; }
.table-scroll { width: 8px; flex: none; background: #e6e6e6; }
.table-scroll i { height: 48px; background: #adadad; }

/* panel */
.panel-head { height: 62px; flex: none; background: #f0f3f5; display: flex; padding: 12px 0 0 23px; }
.collapse { width: 20px; height: 16px; margin-top: 7px; flex: none; }
.panel-head-text { margin-left: 11px; width: 319px; }
.panel-title { font-size: 14px; line-height: 18px; white-space: nowrap; color: #333; padding-left: 1px; }
.panel-links { display: flex; justify-content: space-between; padding-right: 14px; margin-top: 4px; color: #1a7ee6; }
.plink { display: flex; align-items: center; line-height: 16px; }
.plink-doc { margin-top: 2px; }
.plink-switch { margin-top: -2px; }
.ic-help { width: 13px; height: 13px; color: #1a7ee6; margin-right: 3px; }
.ic-sync { width: 13px; height: 14px; margin-right: 2px; }
.search { height: 26px; flex: none; background: #fff; border-bottom: 1px solid #e6e8ea; border-left: 1px solid #e6e8ea; padding-left: 12px; line-height: 24px; color: #c0c0c0; }
.tabs { height: 44px; flex: none; background: #f6f7f9; display: flex; gap: 10px; padding: 6px 0 0 10px; }
.tab { width: 47px; text-align: center; line-height: 38px; color: #444; }
.tab.active { background: #fff; border-radius: 3px 3px 0 0; }
.panel-body { flex: 1; min-height: 0; display: flex; }
.settings { width: 198px; flex: none; padding: 4px 5px 0; }
.label { line-height: 20px; color: #666; }
.select { position: relative; display: flex; align-items: center; height: 31px; padding-left: 11px; border: 1px solid #e6e6e6; border-radius: 4px; color: #333; }
.s1 { margin-top: 7px; }
.l2 { margin-top: 16px; }
.s2 { margin-top: 7px; height: 32px; padding-bottom: 2px; }
.ph { color: #bbb; }
.sel-chev { position: absolute; right: 13px; top: 12px; width: 11px; height: 7px; color: #777; }
.l3 { margin-top: 15px; }
.radios { margin-top: 8px; }
.radio { height: 24px; display: flex; align-items: center; color: #333; }
.radio i { width: 16px; height: 16px; margin-right: 9px; border: 1px solid #c4c4c4; border-radius: 50%; background: #fff; }
.radio.on i { border: 1.500px solid #1677e5; background: radial-gradient(circle, #1677e5 0 5px, #fff 5.500px); }
.field-head { height: 20px; margin-top: 15px; display: flex; justify-content: space-between; align-items: center; }
.field-head .label { margin-top: 4px; }
.fh1 { margin-top: 12px; }
.dyn { display: flex; align-items: center; color: #333; }
.check { width: 16px; height: 16px; margin-right: 8px; border: 1px solid #bdbdbd; border-radius: 2px; }
.dyn .ic-help { margin: 0 1px 0 1px; width: 12px; height: 12px; }
.dropbox { margin-top: 5px; padding: 5px 3px; border: 1px dashed #c4c4c4; display: flex; flex-direction: column; gap: 5px; }
.tall { height: 93px; }
.short { height: 63px; }
.pill { height: 25px; line-height: 25px; padding-left: 5px; background: #3590d8; border-radius: 2px; color: #fff; }
.pill.green { background: #0fb9a2; }
.drop-ph { text-align: center; line-height: 25px; color: #aaa; margin-top: -1px; }
.l4 { margin-top: 16px; }
.switch-row { height: 20px; margin-top: 22px; display: flex; justify-content: space-between; align-items: center; }
.switch-row.first { margin-top: 11px; }
.toggle { position: relative; width: 44px; height: 20px; border-radius: 10px; background: #d0d1d5; }
.toggle::after { content: ""; position: absolute; left: 2px; top: 2px; width: 16px; height: 16px; border-radius: 50%; background: #fff; }
.what { color: #2d8cf0; margin-right: 6px; }
.settings-scroll { width: 5px; flex: none; }
.settings-scroll i { height: 521px; background: #bbb; }
.fields { position: relative; flex: 1; min-width: 0; border-left: 1px solid #e8e8e8; padding: 5px 0 0 5px; }
.model-row { display: flex; align-items: center; }
.model { width: 123px; flex: none; }
.ic-search { width: 13px; height: 13px; margin: 5px 0 0 8px; flex: none; }
.chev-blue { width: 11px; height: 7px; margin-left: 6px; color: #1a7ee6; flex: none; }
.group-head { height: 30px; margin-top: 10px; display: flex; align-items: center; padding-left: 2px; font-size: 13px; color: #333; }
.group-head span { width: 102px; }
.gi { width: 13px; height: 13px; flex: none; }
.gp { width: 12px; height: 12px; margin-left: 19px; flex: none; }
.tree { margin-top: 5px; }
.node { height: 28.700px; display: flex; align-items: center; padding-left: 20px; font-size: 13px; white-space: nowrap; color: #333; }
.node.folder { padding-left: 1px; font-size: 14px; color: #333; }
.tchev { width: 9px; height: 6px; color: #2f86d4; flex: none; }
.tfold { width: 15px; height: 12px; margin: 0 4px; color: #2f86d4; flex: none; }
.str { width: 16px; font-size: 10px; font-weight: 400; color: #4a9de0; }
.ntype { width: 13px; height: 13px; margin-right: 4px; flex: none; }
.drag-bar { width: 159px; height: 12px; margin: 9px 0 0 2px; background: #eff2f4; display: flex; align-items: center; justify-content: center; }
.drag-lines { width: 20px; height: 9px; }
.group-head.measure { margin-top: 3px; }
.green-tree { margin-top: 6px; }
.green-tree .tchev, .green-tree .tfold { color: #13b8a0; }
.n123 { width: 18px; font-size: 11px; font-weight: 400; color: #13b8a0; letter-spacing: -.3px; }
.n05 { width: 21px; font-size: 14px; font-weight: 400; color: #13b8a0; }
.fields-scroll { position: absolute; left: 161px; top: 42px; width: 4px; height: 264px; background: #bbb; }
```
